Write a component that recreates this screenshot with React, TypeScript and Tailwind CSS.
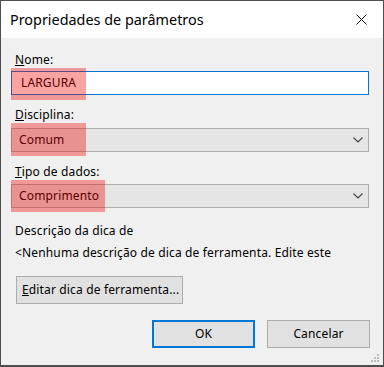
import React from 'react';

const font = { fontFamily: '"Noto Sans", "Liberation Sans", sans-serif' };

const Highlight: React.FC<{ className: string }> = ({ className }) => (
  <div className={`absolute bg-[rgba(238,0,0,0.36)] pointer-events-none ${className}`} />
);

const Chevron = () => (
  <svg width="10" height="6" viewBox="0 0 10 6" className="shrink-0">
    <path d="M0.5 0.5 L5 5 L9.5 0.5" fill="none" stroke="#404040" strokeWidth="1.1" />
  </svg>
);

const Combo: React.FC<{ value: string }> = ({ value }) => (
  <div className="h-[24px] w-[358px] bg-[#e5e5e5] border border-[#adadad] flex items-center pl-[7px] pr-[5px] text-[12px] tracking-[0.15px] text-black">
    <span className="flex-1">{value}</span>
    <Chevron />
  </div>
);

const Label: React.FC<{ mn: string; rest: string; className?: string }> = ({ mn, rest, className }) => (
  <div className={`text-[12px] leading-[16px] tracking-[0.15px] text-black pl-[4px] ${className ?? ''}`}>
    <span className="underline underline-offset-1">{mn}</span>
    {rest}
  </div>
);

export default function App() {
  return (
    <div
      className="relative w-[384px] h-[367px] bg-[#f0f0f0] border border-[#4d4d4d] border-b-2 flex flex-col overflow-hidden"
      style={font}
    >
      {/* title bar */}
      <div className="h-[37px] bg-white flex items-center justify-between pl-[9px] pr-[16px] shrink-0">
        <span className="text-[14.4px] text-black">Propriedades de parâmetros</span>
        <svg width="11" height="11" viewBox="0 0 11 11">
          <path d="M0.5 0.5 L10.5 10.5 M10.5 0.5 L0.5 10.5" stroke="#111" strokeWidth="1" />
        </svg>
      </div>

      <div className="flex flex-col pl-[10px] flex-1">
        <Label mn="N" rest="ome:" className="mt-[14px]" />
        <div className="mt-[3px] h-[24px] w-[358px] bg-white border border-[#0078d7] flex items-center pl-[9px] text-[12px] tracking-[0.15px] text-black">
          LARGURA
        </div>

        <Label mn="D" rest="isciplina:" className="mt-[12px]" />
        <div className="mt-[5px]">
          <Combo value="Comum" />
        </div>

        <Label mn="T" rest="ipo de dados:" className="mt-[12px]" />
        <div className="mt-[4px]">
          <Combo value="Comprimento" />
        </div>

        <div className="mt-[15px] pl-[4px] text-[12px] leading-[16px] tracking-[0.15px] text-black">Descrição da dica de</div>
        <div className="mt-[6px] pl-[4px] text-[12px] leading-[16px] tracking-[0.15px] text-black whitespace-nowrap">
          &lt;Nenhuma descrição de dica de ferramenta. Edite este
        </div>

        <button className="mt-[15px] ml-[5px] w-[167px] h-[28px] bg-[#e1e1e1] border border-[#adadad] text-[12px] tracking-[0.15px] text-black text-left pl-[5px]">
          <span className="underline underline-offset-1">E</span>ditar dica de ferramenta...
        </button>

        <div className="mt-[16px] flex justify-end gap-[12px] pr-[13px]">
          <button className="w-[103px] h-[28px] bg-[#e1e1e1] border-2 border-[#0078d7] text-[12px] text-black">OK</button>
          <button className="w-[103px] h-[28px] bg-[#e1e1e1] border border-[#adadad] text-[12px] tracking-[0.15px] text-black">Cancelar</button>
        </div>
      </div>

      {/* resize grip */}
      <svg width="10" height="10" viewBox="0 0 10 10" className="absolute right-[3px] bottom-[2px]">
        <rect x="7" y="1" width="2" height="2" fill="#bcbcbc" />
        <rect x="4" y="4" width="2" height="2" fill="#bcbcbc" />
        <rect x="7" y="4" width="2" height="2" fill="#bcbcbc" />
        <rect x="1" y="7" width="2" height="2" fill="#bcbcbc" />
        <rect x="4" y="7" width="2" height="2" fill="#bcbcbc" />
        <rect x="7" y="7" width="2" height="2" fill="#bcbcbc" />
      </svg>

      {/* red annotation boxes */}
      <Highlight className="left-[10px] top-[67px] w-[75px] h-[32px]" />
      <Highlight className="left-[10px] top-[122px] w-[75px] h-[33px]" />
      <Highlight className="left-[10px] top-[179px] w-[94px] h-[32px]" />
    </div>
  );
}
